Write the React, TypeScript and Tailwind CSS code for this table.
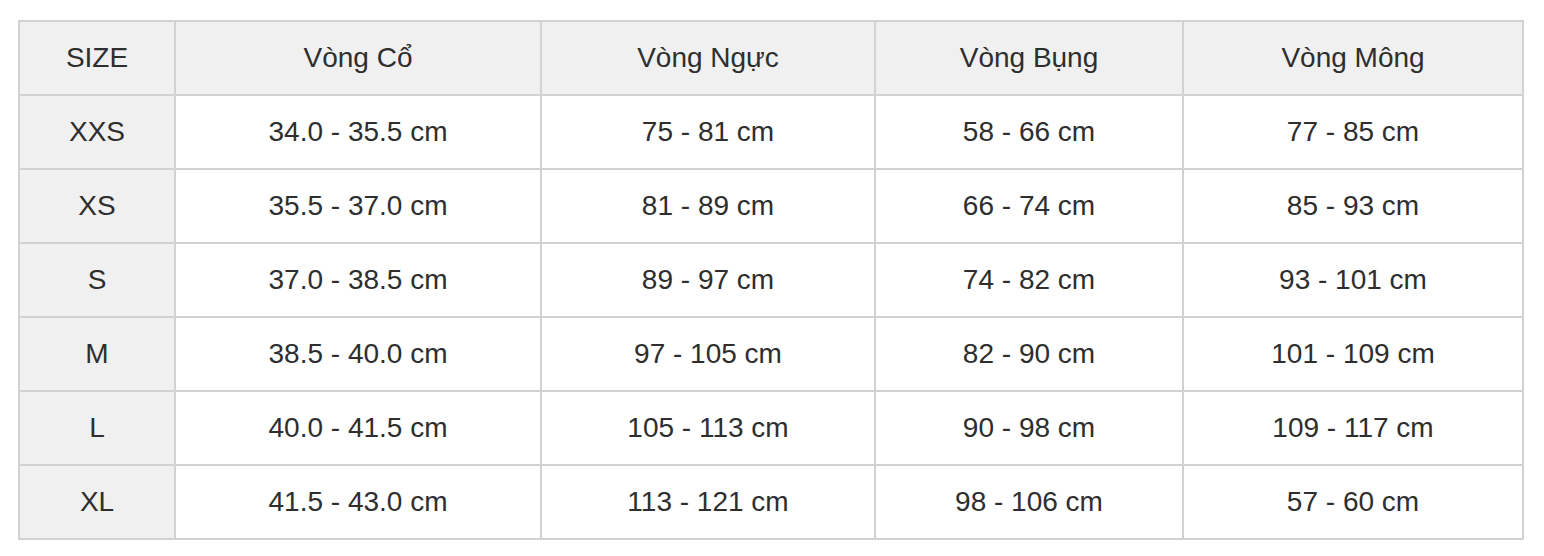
import React from "react";

const headers = ["SIZE", "Vòng Cổ", "Vòng Ngực", "Vòng Bụng", "Vòng Mông"];
const widths = ["w-[156px]", "w-[366px]", "w-[334px]", "w-[308px]", "w-[340px]"];

const rows = [
  ["XXS", "34.0 - 35.5 cm", "75 - 81 cm", "58 - 66 cm", "77 - 85 cm"],
  ["XS", "35.5 - 37.0 cm", "81 - 89 cm", "66 - 74 cm", "85 - 93 cm"],
  ["S", "37.0 - 38.5 cm", "89 - 97 cm", "74 - 82 cm", "93 - 101 cm"],
  ["M", "38.5 - 40.0 cm", "97 - 105 cm", "82 - 90 cm", "101 - 109 cm"],
  ["L", "40.0 - 41.5 cm", "105 - 113 cm", "90 - 98 cm", "109 - 117 cm"],
  ["XL", "41.5 - 43.0 cm", "113 - 121 cm", "98 - 106 cm", "57 - 60 cm"],
];

export default function App() {
  return (
    <div className="w-[1544px] h-[556px] bg-white pl-[18px] pt-[20px] font-['Liberation_Sans',Arial,sans-serif] text-[#2e2e2e]">
      <table className="border-collapse table-fixed w-[1506px] text-[28px]">
        <thead>
          <tr className="h-[74px] bg-[#f0f0f0]">
            {headers.map((h, i) => (
              <th key={h} className={`${widths[i]} border-2 border-[#d2d2d2] font-normal text-center align-middle`}>
                {h}
              </th>
            ))}
          </tr>
        </thead>
        <tbody>
          {rows.map((r) => (
            <tr key={r[0]} className="h-[74px]">
              {r.map((c, i) => (
                <td
                  key={i}
                  className={
                    i === 0
                      ? "border-2 border-[#d2d2d2] bg-[#f0f0f0] text-center align-middle"
                      : "border-2 border-[#d2d2d2] bg-white text-center align-middle"
                  }
                >
                  {c}
                </td>
              ))}
            </tr>
          ))}
        </tbody>
      </table>
    </div>
  );
}
